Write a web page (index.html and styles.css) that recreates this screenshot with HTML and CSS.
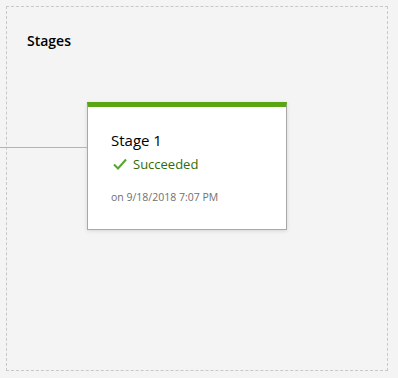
FILE: index.html
```html
<!DOCTYPE html>
<html lang="en">
<head>
  <meta charset="UTF-8">
  <title>Stages</title>
  <link rel="stylesheet" href="styles.css">
</head>
<body>
  <div class="stages">
    <h2 class="stages-title">Stages</h2>
    <div class="stage-row">
      <div class="connector"></div>
      <div class="stage-card">
        <div class="stage-name">Stage 1</div>
        <div class="stage-status">
          <svg class="check" width="14" height="12" viewBox="0 0 14 12">
            <path d="M1 6.5 L5 10.5 L13 1.5" fill="none" stroke="#55a52f" stroke-width="2"/>
          </svg>
          <span>Succeeded</span>
        </div>
        <div class="stage-date">on 9/18/2018 7:07 PM</div>
      </div>
    </div>
  </div>
</body>
</html>
```

FILE: styles.css
```css
body {
  margin: 0;
  background: #f4f4f4;
  font-family: "Open Sans", Arial, sans-serif;
}
.stages {
  margin: 6px 0 0 6px;
  width: 382px;
  height: 365px;
  border: 1px dashed #c8c8c8;
  padding: 0 0 0 20px;
  box-sizing: border-box;
}
.stages-title {
  margin: 0;
  padding-top: 24px;
  font-size: 14px;
  font-weight: 600;
  color: #000;
  line-height: 20px;
}
.stage-row {
  position: relative;
  margin-top: 51px;
  padding-left: 60px;
}
.connector {
  position: absolute;
  left: -27px;
  top: 45px;
  width: 87px;
  height: 1px;
  background: #b4b4b4;
}
.stage-card {
  width: 200px;
  box-sizing: border-box;
  background: #fff;
  border: 1px solid #a8a8a8;
  border-top: 5px solid #5aa514;
  box-shadow: 0 1px 4px rgba(0, 0, 0, 0.12);
  padding: 22px 24px 24px 23px;
}
.stage-name {
  font-size: 15px;
  line-height: 22px;
  color: #000;
}
.stage-status {
  display: flex;
  align-items: center;
  gap: 6px;
  margin-top: 3px;
  font-size: 13px;
  line-height: 20px;
  color: #2f6b0a;
}
.check {
  margin-left: 2px;
}
.stage-date {
  margin-top: 15px;
  font-size: 10.5px;
  line-height: 16px;
  color: #707070;
}
```
